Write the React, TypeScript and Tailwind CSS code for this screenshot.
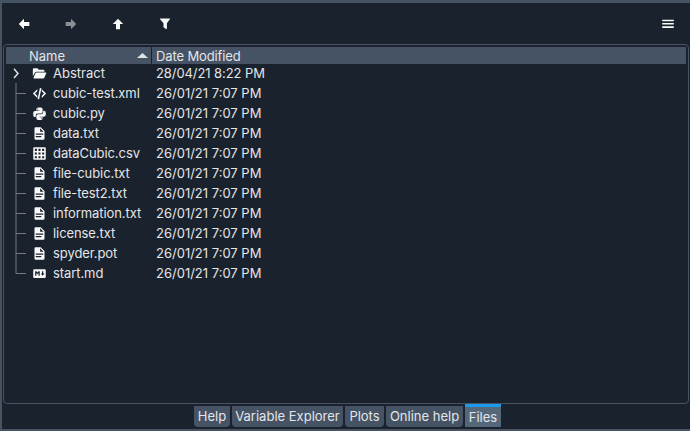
import React from "react";

type Kind = "folder" | "xml" | "python" | "text" | "grid" | "markdown";

const paths: Record<Exclude<Kind, "folder">, string> = {
  xml: "M12.6,3L15.1,3.4L11.4,21L8.9,20.6L12.6,3M19.2,12L15.6,8.41V5L22.6,12L15.6,19V15.58L19.2,12M1.4,12L8.4,5V8.41L4.8,12L8.4,15.58V19L1.4,12Z",
  python:
    "M19.14,7.5A2.86,2.86 0 0,1 22,10.36V14.14A2.86,2.86 0 0,1 19.14,17H12C12,17.39 12.32,17.96 12.71,17.96H17V19.64A2.86,2.86 0 0,1 14.14,22.5H9.86A2.86,2.86 0 0,1 7,19.64V15.89C7,14.31 8.28,13.04 9.86,13.04H15.11C16.69,13.04 17.96,11.76 17.96,10.18V7.5H19.14M14.86,19.29C14.46,19.29 14.14,19.59 14.14,20.18C14.14,20.77 14.46,20.89 14.86,20.89A0.71,0.71 0 0,0 15.57,20.18C15.57,19.59 15.25,19.29 14.86,19.29M4.86,17.5C3.28,17.5 2,16.22 2,14.64V10.86C2,9.28 3.28,8 4.86,8H12C12,7.61 11.68,7.04 11.29,7.04H7V5.36C7,3.78 8.28,2.5 9.86,2.5H14.14C15.72,2.5 17,3.78 17,5.36V9.11C17,10.69 15.72,11.96 14.14,11.96H8.89C7.31,11.96 6.04,13.24 6.04,14.82V17.5H4.86M9.14,5.71C9.54,5.71 9.86,5.41 9.86,4.82C9.86,4.23 9.54,4.11 9.14,4.11C8.75,4.11 8.43,4.23 8.43,4.82C8.43,5.41 8.75,5.71 9.14,5.71Z",
  text: "M13,9H18.5L13,3.5V9M6,2H14L20,8V20A2,2 0 0,1 18,22H6C4.89,22 4,21.1 4,20V4C4,2.89 4.89,2 6,2M15,18V16H6V18H15M18,14V12H6V14H18Z",
  grid: "M3.5 2H20.5A1.5 1.5 0 0 1 22 3.5V20.5A1.5 1.5 0 0 1 20.5 22H3.5A1.5 1.5 0 0 1 2 20.5V3.5A1.5 1.5 0 0 1 3.5 2M4.5 4.5V7.8H7.8V4.5ZM10.3 4.5V7.8H13.7V4.5ZM16.2 4.5V7.8H19.5V4.5ZM4.5 10.3V13.7H7.8V10.3ZM10.3 10.3V13.7H13.7V10.3ZM16.2 10.3V13.7H19.5V10.3ZM4.5 16.2V19.5H7.8V16.2ZM10.3 16.2V19.5H13.7V16.2ZM16.2 16.2V19.5H19.5V16.2Z",
  markdown:
    "M3.5 5H20.5A1.5 1.5 0 0 1 22 6.5V17.5A1.5 1.5 0 0 1 20.5 19H3.5A1.5 1.5 0 0 1 2 17.5V6.5A1.5 1.5 0 0 1 3.5 5M5 15.5H7V11.3L8.7 13.2L10.4 11.3V15.5H12.4V8.5H10.4L8.7 10.5L7 8.5H5V15.5M16 8.5V12H14L17 15.6L20 12H18V8.5H16Z",
};

function FileIcon({ kind }: { kind: Kind }) {
  if (kind === "folder") {
    return (
      <svg className="h-[15px] w-[15px]" viewBox="0 0 14 14" fill="#fafafa">
        <path d="M.8 9.6V3.2Q.8 2.2 1.8 2.2H5L6.4 3.6H10.6Q11.6 3.6 11.6 4.6V5.3H4.2Q3.1 5.3 2.6 6.2ZM3.2 6.7Q3.5 6 4.1 6H12.9Q13.7 6 13.3 6.8L11.5 11Q11.2 11.6 10.5 11.6H1.9Q1.1 11.6 1.5 10.8Z" />
      </svg>
    );
  }
  return (
    <svg className="h-[15px] w-[15px]" viewBox="0 0 24 24" fill="#fafafa" fillRule="evenodd">
      <path d={paths[kind]} />
    </svg>
  );
}

const files: { name: string; date: string; kind: Kind }[] = [
  { name: "Abstract", date: "28/04/21 8:22 PM", kind: "folder" },
  { name: "cubic-test.xml", date: "26/01/21 7:07 PM", kind: "xml" },
  { name: "cubic.py", date: "26/01/21 7:07 PM", kind: "python" },
  { name: "data.txt", date: "26/01/21 7:07 PM", kind: "text" },
  { name: "dataCubic.csv", date: "26/01/21 7:07 PM", kind: "grid" },
  { name: "file-cubic.txt", date: "26/01/21 7:07 PM", kind: "text" },
  { name: "file-test2.txt", date: "26/01/21 7:07 PM", kind: "text" },
  { name: "information.txt", date: "26/01/21 7:07 PM", kind: "text" },
  { name: "license.txt", date: "26/01/21 7:07 PM", kind: "text" },
  { name: "spyder.pot", date: "26/01/21 7:07 PM", kind: "text" },
  { name: "start.md", date: "26/01/21 7:07 PM", kind: "markdown" },
];

function Branch({ index }: { index: number }) {
  if (index === 0) {
    return (
      <svg className="h-5 w-[26px]" viewBox="0 0 26 20" fill="none">
        <path d="M8 5.8L12 10.4L8 15" stroke="#e0e1e3" strokeWidth="1.5" />
      </svg>
    );
  }
  const last = index === files.length - 1;
  return (
    <svg className="h-5 w-[26px]" viewBox="0 0 26 20" fill="none" stroke="#74797f">
      <path d={last ? "M10 0V10.5H20" : "M10 0V20M10 10.5H20"} />
    </svg>
  );
}

const tabs = [
  { label: "Help", width: "w-[36px]" },
  { label: "Variable Explorer", width: "w-[111px]" },
  { label: "Plots", width: "w-[39px]" },
  { label: "Online help", width: "w-[77px]" },
  { label: "Files", width: "w-[36px]" },
];

function Toolbar() {
  return (
    <div className="flex h-[41px] shrink-0 items-center pl-[14px] pr-[15px]">
      <div className="flex flex-1 items-center gap-[31px]">
        <svg className="h-4 w-4" viewBox="0 0 24 24" fill="#fafafa">
          <path d="M20,9V15H12V19.84L4.16,12L12,4.16V9H20Z" />
        </svg>
        <svg className="h-4 w-4" viewBox="0 0 24 24" fill="#8c9095">
          <path d="M4,15V9H12V4.16L19.84,12L12,19.84V15H4Z" />
        </svg>
        <svg className="h-4 w-4" viewBox="0 0 24 24" fill="#fafafa">
          <path d="M15,20H9V12H4.16L12,4.16L19.84,12H15V20Z" />
        </svg>
        <svg className="h-4 w-4" viewBox="0 0 16 16" fill="#fafafa">
          <path d="M3.6 2.4H12.4Q13.3 2.5 12.9 3.3L9.9 7.2V12.6Q9.8 13.5 9 13.1L6.5 11.2V7.2L3.1 3.3Q2.7 2.5 3.6 2.4Z" />
        </svg>
      </div>
      <svg className="h-3.5 w-3.5" viewBox="0 0 14 14" fill="#fafafa">
        <path d="M1.2 2.7H12.8V4.3H1.2ZM1.2 6H12.8V7.6H1.2ZM1.2 9.3H12.8V10.9H1.2Z" />
      </svg>
    </div>
  );
}

export default function App() {
  return (
    <main className="flex h-[431px] w-[690px] flex-col overflow-hidden border-b-2 border-l-2 border-t-[3px] border-[#455364] bg-[#1a222d] font-['Inter','Liberation_Sans',sans-serif] text-[13px] text-[#e3e5e9]">
      <Toolbar />
      <section className="ml-px mr-px flex h-[360px] shrink-0 flex-col rounded-[4px] border border-[#455364] px-0.5 pt-0.5">
        <div className="flex h-[17px] shrink-0 bg-[#455364] leading-[18px]">
          <div className="flex w-[146px] items-center justify-between border-r border-[#1a222d] pl-[23px] pr-[3px]">
            <span>Name</span>
            <svg className="h-[5px] w-[11px]" viewBox="0 0 11 5" fill="#dfe1e5">
              <path d="M0 5L5.5 0L11 5Z" />
            </svg>
          </div>
          <span className="pl-1 tracking-[-0.12px]">Date Modified</span>
        </div>
        <div className="-mt-px flex flex-col">
          {files.map((file, index) => (
            <div key={file.name} className="flex h-5 items-center whitespace-nowrap leading-5">
              <Branch index={index} />
              <div className="flex w-[21px] items-center">
                <FileIcon kind={file.kind} />
              </div>
              <span className={index === 0 ? "w-[103px]" : "w-[103px] tracking-[-0.08px]"}>{file.name}</span>
              <span className={index === 0 ? "tracking-[-0.08px]" : ""}>{file.date}</span>
            </div>
          ))}
        </div>
      </section>
      <nav className="flex h-[23px] shrink-0 items-start gap-0.5 pl-[192px]">
        {tabs.map((tab) => (
          <div
            key={tab.label}
            className={`flex shrink-0 items-center justify-center whitespace-nowrap ${tab.width} ${
              tab.label === "Files"
                ? "h-[23px] border-t-[3px] border-[#1a9bf0] bg-[#54687a] pt-px"
                : "mt-[2px] h-[21px] rounded-b-[4px] bg-[#455364] pt-px"
            }`}
          >
            {tab.label}
          </div>
        ))}
      </nav>
    </main>
  );
}
